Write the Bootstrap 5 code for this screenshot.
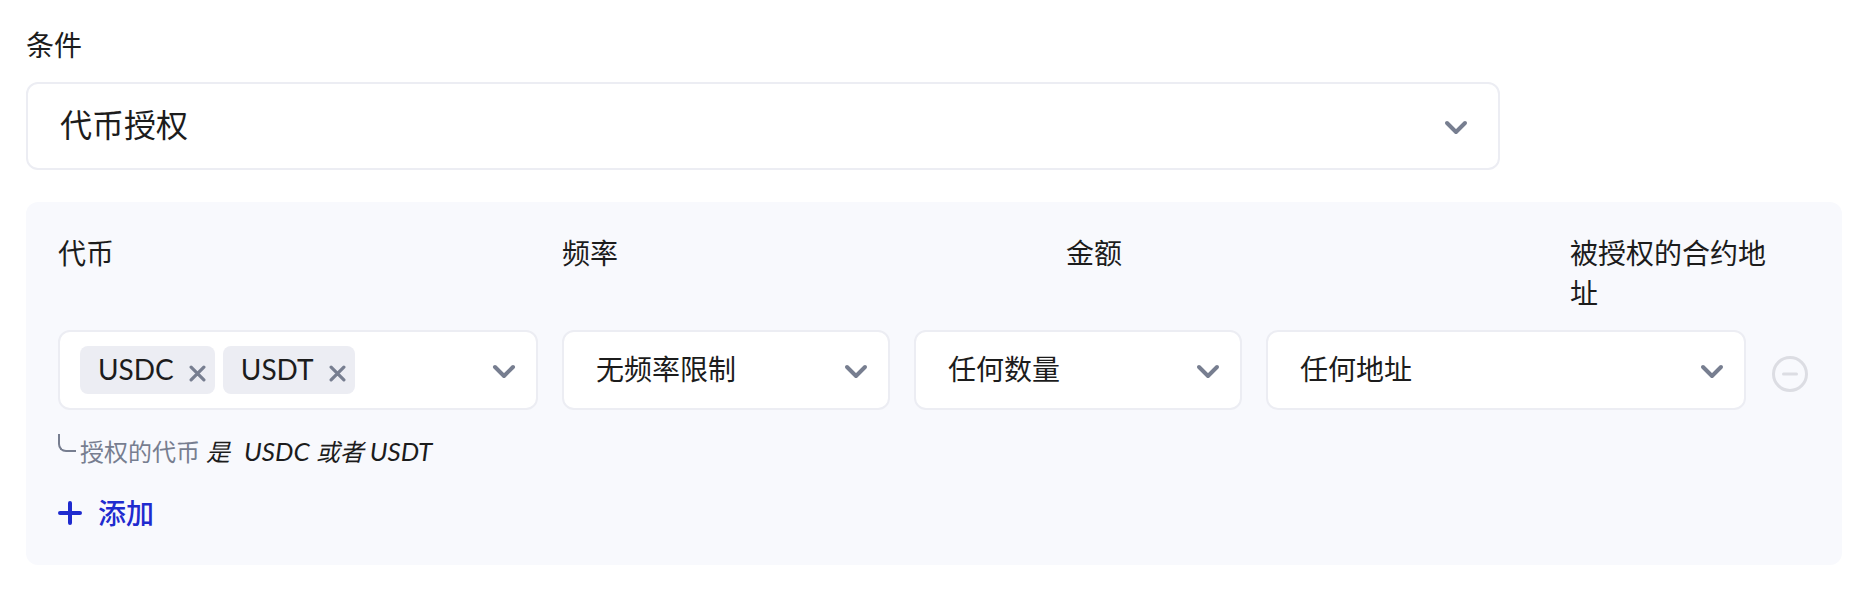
<!DOCTYPE html>
<html lang="zh-CN">
<head>
<meta charset="utf-8">
<meta name="viewport" content="width=device-width, initial-scale=1">
<title>代币授权</title>
<link rel="stylesheet" href="https://cdn.jsdelivr.net/npm/bootstrap@5.3.0/dist/css/bootstrap.min.css">
<style>
  :root { --ink: #1c1c1c; --muted: #777e90; --line: #ecedf3; --brand: #1f2bcf; }
  body { font: 400 28px/40px Lato, "Noto Sans CJK SC", sans-serif; color: var(--ink); background: #fff; }
  .page { padding: 25px 30px 28px 26px; }
  .condition { width: 81.17%; }
  .condition label { margin-bottom: 17px; }
  .field-box, .form-select {
    height: 80px; border: 2px solid var(--line); border-radius: 12px; background-color: #fff;
  }
  .form-select {
    padding: 0 56px 2px 32px; font-size: 28px; line-height: 40px; color: var(--ink);
    background-image: url("data:image/svg+xml,%3Csvg xmlns='http://www.w3.org/2000/svg' viewBox='0 0 24 24'%3E%3Cpath fill='none' stroke='%23777e90' stroke-width='4' stroke-linecap='round' stroke-linejoin='round' d='M3 9l9 9 9-9'/%3E%3C/svg%3E");
    background-size: 24px 24px; background-position: right 20px center;
  }
  .form-select.main-select { height: 88px; font-size: 32px; background-position: right 30px center; }
  .panel { margin-top: 32px; padding: 31px 32px 32px; border-radius: 12px; background: #f8f9fd; }
  .heads { display: grid; grid-template-columns: 2fr 2fr 2fr 1fr; gap: 24px; margin-bottom: 17px; }
  .heads label:last-child { padding-right: 24px; }
  .fields { display: grid; grid-template-columns: 60fr 41fr 41fr 60fr 40px; gap: 24px; }
  .field-box { padding: 0 20px; }
  .token { height: 48px; padding: 0 9px 2px 18px; gap: 15px; border-radius: 8px; background: var(--line); }
  .plain { padding: 0; border: 0; background: none; color: var(--muted); line-height: 0; }
  .token .plain { padding-top: 8px; }
  .remove-row { padding-top: 8px; color: #dcdde3; }
  .hint { margin-top: 24px; gap: 4px; font-size: 24px; line-height: 36px; color: var(--muted); }
  .elbow { width: 18px; height: 18px; border: solid var(--muted); border-width: 0 0 2px 2px; border-bottom-left-radius: 8px; }
  .hint em { color: var(--ink); }
  .hint .symbol { font-size: 26px; line-height: 32px; }
  .sentence { gap: 6px; }
  .add { margin-top: 23px; gap: 16px; color: var(--brand); font-weight: 500; line-height: 40px; }
</style>
</head>
<body>
<main class="page">
  <div class="condition">
    <label for="condition" class="d-block">条件</label>
    <select id="condition" class="form-select main-select"><option>代币授权</option></select>
  </div>

  <section class="panel">
    <div class="heads">
      <label for="token">代币</label>
      <label for="frequency">频率</label>
      <label for="amount">金额</label>
      <label for="address">被授权的合约地址</label>
    </div>
    <div class="fields">
      <div class="field-box d-flex align-items-center gap-2">
        <span class="token d-flex align-items-center">USDC
          <button type="button" class="plain" aria-label="移除 USDC"><svg width="17" height="17" viewBox="0 0 16 16" fill="none" stroke="currentColor" stroke-width="3" stroke-linecap="round"><path d="M2 2l12 12M14 2L2 14"/></svg></button>
        </span>
        <span class="token d-flex align-items-center">USDT
          <button type="button" class="plain" aria-label="移除 USDT"><svg width="17" height="17" viewBox="0 0 16 16" fill="none" stroke="currentColor" stroke-width="3" stroke-linecap="round"><path d="M2 2l12 12M14 2L2 14"/></svg></button>
        </span>
        <button type="button" id="token" class="plain ms-auto" aria-label="选择代币"><svg width="24" height="24" viewBox="0 0 24 24" fill="none" stroke="currentColor" stroke-width="4" stroke-linecap="round" stroke-linejoin="round"><path d="M3 9l9 9 9-9"/></svg></button>
      </div>
      <select id="frequency" class="form-select"><option>无频率限制</option></select>
      <select id="amount" class="form-select"><option>任何数量</option></select>
      <select id="address" class="form-select"><option>任何地址</option></select>
      <button type="button" class="plain remove-row" aria-label="移除条件"><svg width="36" height="36" viewBox="0 0 36 36" fill="none" stroke="currentColor" stroke-width="3" stroke-linecap="round"><circle cx="18" cy="18" r="16.5"/><path d="M11.500 18h13"/></svg></button>
    </div>
    <div class="hint d-flex">
      <span class="elbow"></span>
      <span class="sentence d-flex align-items-baseline">
        <span>授权的代币</span>
        <em class="me-2">是</em>
        <em class="symbol">USDC</em>
        <em>或者</em>
        <em class="symbol">USDT</em>
      </span>
    </div>
    <button type="button" class="plain add d-flex align-items-center"><svg width="24" height="24" viewBox="0 0 24 24" fill="none" stroke="currentColor" stroke-width="4" stroke-linecap="round"><path d="M12 2v20M2 12h20"/></svg>添加</button>
  </section>
</main>
<script src="https://cdn.jsdelivr.net/npm/bootstrap@5.3.0/dist/js/bootstrap.bundle.min.js"></script>
</body>
</html>
